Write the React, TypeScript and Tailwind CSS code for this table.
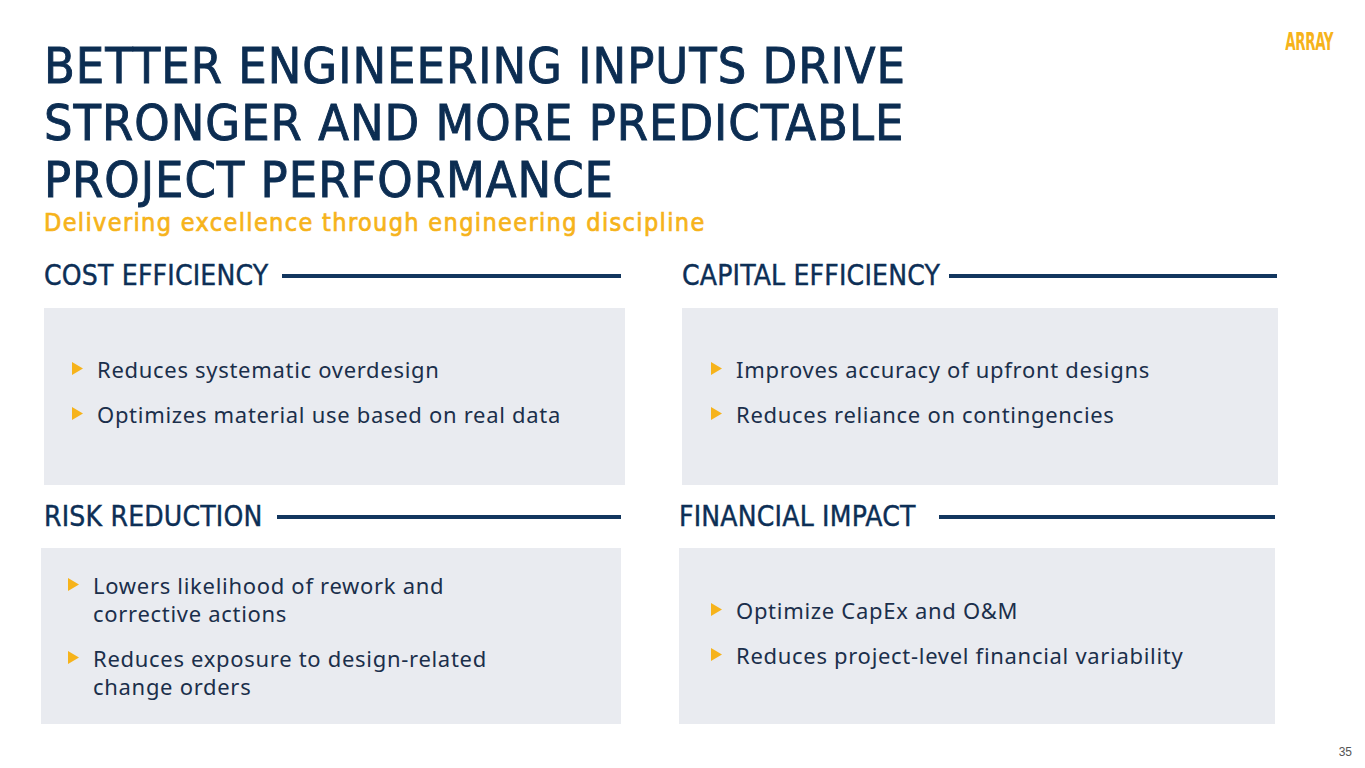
import React from "react";

const COND = '"Liberation Sans Narrow", "DejaVu Sans Condensed", sans-serif';

function Heading({ title, lineClass }: { title: string; lineClass: string }) {
  return (
    <div className="flex items-center h-[30px]">
      <span
        className="text-[#0d2f56] text-[28px] leading-none whitespace-nowrap tracking-[0.2px] [-webkit-text-stroke:0.4px_#0d2f56]"
        style={{ fontFamily: COND }}
      >
        {title}
      </span>
      <div className={`h-[4px] bg-[#12365f] ${lineClass}`} />
    </div>
  );
}

function Bullet({ lines }: { lines: string[] }) {
  return (
    <div className="flex items-start">
      <div className="w-[25px] h-[28px] flex items-center shrink-0">
        <svg width="11" height="13" viewBox="0 0 11 13">
          <polygon points="0,0 11,6.5 0,13" fill="#f6b31b" />
        </svg>
      </div>
      <div className="text-[#1b2f4b] text-[22px] leading-[28px] tracking-[0.7px]">
        {lines.map((l, i) => (
          <div key={i} className="whitespace-nowrap">
            {l}
          </div>
        ))}
      </div>
    </div>
  );
}

function Box({ items, className }: { items: string[][]; className: string }) {
  return (
    <div className={`bg-[#e9ebf0] flex flex-col justify-center gap-[17px] ${className}`}>
      {items.map((it, i) => (
        <Bullet key={i} lines={it} />
      ))}
    </div>
  );
}

export default function App() {
  return (
    <div
      className="w-[1365px] h-[768px] bg-white relative overflow-hidden"
      style={{ fontFamily: '"Noto Sans", "Open Sans", sans-serif' }}
    >
      <div className="absolute right-[32px] top-[30px]">
        <span
          className="inline-block text-[#f6b31b] text-[24px] font-bold leading-none scale-x-[0.62] origin-right tracking-tight"
          style={{ fontFamily: COND }}
        >
          ARRAY
        </span>
      </div>

      <div className="pl-[44px] pt-[38px]">
        <h1
          className="text-[#0c2d52] text-[50px] leading-[57px] tracking-[1px] [-webkit-text-stroke:0.9px_#0c2d52]"
          style={{ fontFamily: COND }}
        >
          BETTER ENGINEERING INPUTS DRIVE
          <br />
          STRONGER AND MORE PREDICTABLE
          <br />
          PROJECT PERFORMANCE
        </h1>
        <div
          className="text-[#f6b31b] text-[25px] leading-[30px] mt-[-1px] tracking-[1.35px] [-webkit-text-stroke:0.7px_#f6b31b]"
          style={{ fontFamily: COND }}
        >
          Delivering excellence through engineering discipline
        </div>
      </div>

      <div className="flex mt-[23px]">
        <div className="ml-[44px] w-[581px] flex flex-col">
          <Heading title="COST EFFICIENCY" lineClass="ml-[14px] w-[339px]" />
          <Box
            className="mt-[17px] h-[177px] pl-[28px] pb-[11px]"
            items={[["Reduces systematic overdesign"], ["Optimizes material use based on real data"]]}
          />
        </div>
        <div className="ml-[57px] w-[596px] flex flex-col">
          <Heading title="CAPITAL EFFICIENCY" lineClass="ml-[9px] w-[328px]" />
          <Box
            className="mt-[17px] h-[177px] pl-[29px] pb-[11px]"
            items={[["Improves accuracy of upfront designs"], ["Reduces reliance on contingencies"]]}
          />
        </div>
      </div>

      <div className="flex mt-[17px]">
        <div className="ml-[41px] w-[580px] flex flex-col">
          <div className="ml-[3px]">
            <Heading title="RISK REDUCTION" lineClass="ml-[14px] w-[347px]" />
          </div>
          <Box
            className="mt-[16px] h-[176px] pl-[27px] pb-[2px]"
            items={[
              ["Lowers likelihood of rework and", "corrective actions"],
              ["Reduces exposure to design-related", "change orders"],
            ]}
          />
        </div>
        <div className="ml-[58px] w-[596px] flex flex-col">
          <Heading title="FINANCIAL IMPACT" lineClass="ml-[23px] w-[338px]" />
          <Box
            className="mt-[16px] h-[176px] pl-[32px] pb-[8px]"
            items={[["Optimize CapEx and O&M"], ["Reduces project-level financial variability"]]}
          />
        </div>
      </div>

      <div
        className="absolute right-[13px] bottom-[7px] text-[12px] text-[#555]"
        style={{ fontFamily: '"Liberation Sans Narrow", "Liberation Sans", sans-serif' }}
      >
        35
      </div>
    </div>
  );
}
